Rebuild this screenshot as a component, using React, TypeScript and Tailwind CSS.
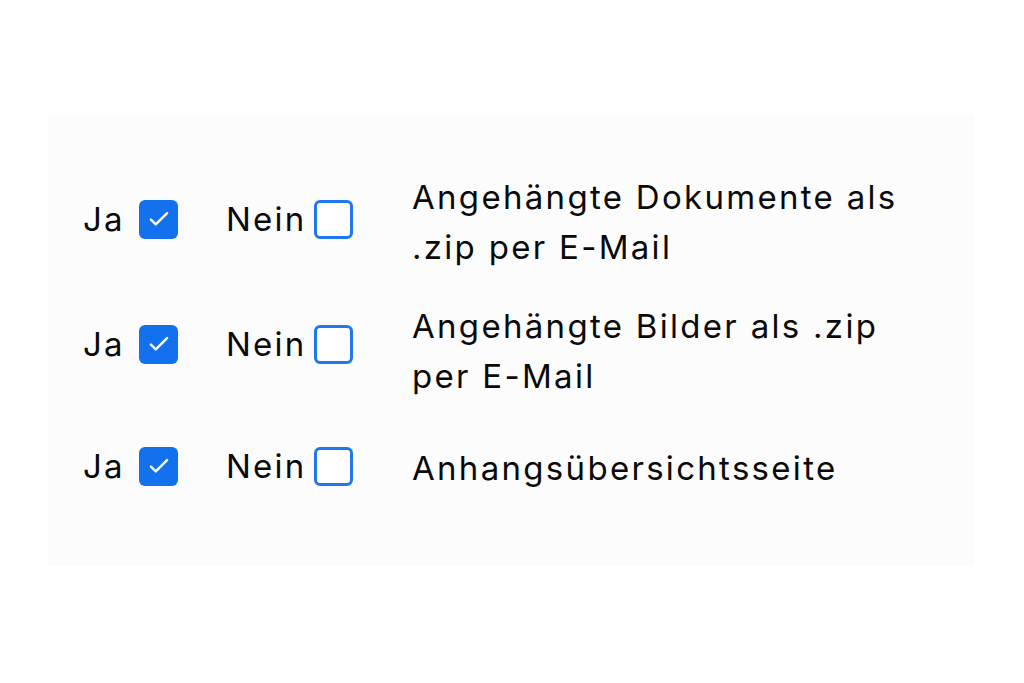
import React from 'react';

interface Option {
  id: number;
  label: string[];
  boxShift: string;
  rowClass: string;
}

const options: Option[] = [
  { id: 1, label: ['Angehängte Dokumente als', '.zip per E-Mail'], boxShift: 'mb-[6px]', rowClass: 'mt-0' },
  { id: 2, label: ['Angehängte Bilder als .zip', 'per E-Mail'], boxShift: 'mb-[14px]', rowClass: 'mt-[29px]' },
  { id: 3, label: ['Anhangsübersichtsseite'], boxShift: 'mb-[4px]', rowClass: 'mt-[42px]' },
];

function CheckIcon() {
  return (
    <svg viewBox="0 0 24 24" className="w-[26px] h-[26px]" fill="none" stroke="white" strokeWidth={2.2} strokeLinecap="round" strokeLinejoin="round">
      <path d="M4.5 12.5l4.5 4.5L19.5 6.5" />
    </svg>
  );
}

function Box({ checked }: { checked: boolean }) {
  return checked ? (
    <span className="flex items-center justify-center w-[39px] h-[39px] rounded-[6px] bg-[#1371ee]">
      <CheckIcon />
    </span>
  ) : (
    <span className="block w-[39px] h-[39px] rounded-[6px] border-[3px] border-[#1f78f0] bg-white" />
  );
}

export default function App() {
  return (
    <div className="w-[1024px] h-[683px] bg-white pt-[115px] pl-[48px] font-['Inter',sans-serif] font-normal text-[#0a0a0a]">
      <div className="w-[926px] h-[451px] bg-[#fcfcfc] pt-[57px] pl-[35px]">
        {options.map((opt) => (
          <div key={opt.id} className={`flex items-center ${opt.rowClass}`}>
            <div className={`flex items-center ${opt.boxShift}`}>
              <span className="w-[56px] text-[33px] leading-[40px] tracking-[2.2px]">Ja</span>
              <Box checked />
              <span className="ml-[48px] w-[88px] text-[33px] leading-[40px] tracking-[2.2px]">Nein</span>
              <Box checked={false} />
            </div>
            <div className="ml-[59px] text-[33px] leading-[50px] tracking-[2.3px]">
              {opt.label.map((line) => (
                <div key={line}>{line}</div>
              ))}
            </div>
          </div>
        ))}
      </div>
    </div>
  );
}
